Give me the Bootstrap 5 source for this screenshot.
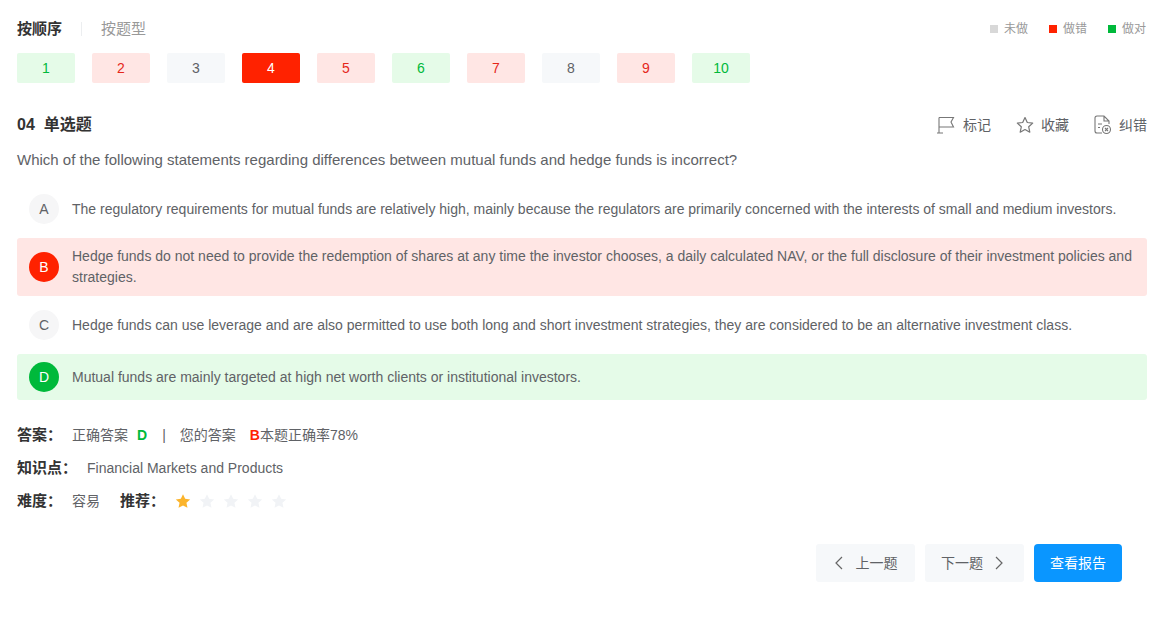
<!DOCTYPE html>
<html lang="en">
<head>
    <meta charset="UTF-8">
    <title>Quiz Result</title>
    <link href="https://cdn.jsdelivr.net/npm/bootstrap@5.3.0/dist/css/bootstrap.min.css" rel="stylesheet">
    <style>
        body {
            background: #fff;
            color: #606266;
            font-family: "Liberation Sans", "Noto Sans CJK SC", sans-serif;
            font-size: 14px;
        }
        .quiz-page { padding: 19px 19px 0 17px; }
        .top-bar { height: 20px; }
        .tab-on { font-size: 15px; font-weight: 700; color: #333; }
        .tab-sep { width: 1px; height: 14px; background: #eceef0; margin: 0 19px; }
        .tab-off { font-size: 15px; color: #999; }
        .legend-list { gap: 21px; padding-right: 1px; }
        .legend-item { font-size: 12px; color: #999; gap: 6px; }
        .legend-dot { width: 8px; height: 8px; }
        .dot-gray { background: #d8d8d8; }
        .dot-red { background: #ff2200; }
        .dot-green { background: #00b93b; }
        .num-row { gap: 17px; margin-top: 14px; }
        .num-tile { width: 58px; height: 30px; border-radius: 2px; }
        .tile-right { background: #e5fbe8; color: #00b93b; }
        .tile-wrong { background: #ffe6e4; color: #e5261a; }
        .tile-none { background: #f6f8fa; color: #606266; }
        .tile-current { background: #ff2200; color: #fff; }
        .head-row { margin-top: 30px; height: 24px; }
        .q-type { font-size: 16px; font-weight: 700; color: #333; }
        .q-type span { margin-left: 9px; }
        .tool-list { gap: 25px; }
        .tool-item { color: #606266; gap: 7px; }
        .q-text { font-size: 15px; margin-top: 12px; line-height: 22px; }
        .opt-list { margin-top: 15px; gap: 6px; }
        .opt-row { min-height: 46px; padding: 8px 13px 8px 12px; border-radius: 3px; gap: 13px; line-height: 21px; }
        .opt-wrong { background: #ffe6e4; }
        .opt-right { background: #e5fbe8; }
        .opt-letter { width: 30px; height: 30px; border-radius: 50%; background: #f6f6f7; flex-shrink: 0; }
        .letter-wrong { background: #ff2200; color: #fff; }
        .letter-right { background: #00b93b; color: #fff; }
        .info-block { margin-top: 19px; }
        .info-row { height: 33px; }
        .info-label { font-size: 15px; font-weight: 700; color: #333; margin-right: 10px; }
        .ans-right { color: #00b93b; font-weight: 700; margin-left: 9px; }
        .ans-sep { margin: 0 14px 0 15px; }
        .ans-wrong { color: #ff2200; font-weight: 700; margin-left: 14px; }
        .easy-text { margin-right: 20px; }
        .star-row { gap: 8px; margin-bottom: 2px; }
        .foot-row { margin-top: 26px; padding-right: 25px; gap: 10px; }
        .page-btn { height: 38px; width: 99px; background: #f6f8fa; border: 0; border-radius: 3px; color: #606266; font-size: 14px; gap: 12px; }
        .next-btn { gap: 11px; padding-right: 10px; }
        .report-btn { height: 38px; width: 88px; background: #0a96ff; border: 0; border-radius: 4px; color: #fff; font-size: 14px; }
    </style>
</head>
<body>

<div class="quiz-page">
    <div class="top-bar d-flex align-items-center justify-content-between">
        <div class="d-flex align-items-center">
            <span class="tab-on">按顺序</span>
            <span class="tab-sep"></span>
            <span class="tab-off">按题型</span>
        </div>
        <div class="legend-list d-flex align-items-center">
            <span class="legend-item d-flex align-items-center"><i class="legend-dot dot-gray"></i>未做</span>
            <span class="legend-item d-flex align-items-center"><i class="legend-dot dot-red"></i>做错</span>
            <span class="legend-item d-flex align-items-center"><i class="legend-dot dot-green"></i>做对</span>
        </div>
    </div>

    <div class="num-row d-flex">
        <div class="num-tile tile-right d-flex align-items-center justify-content-center">1</div>
        <div class="num-tile tile-wrong d-flex align-items-center justify-content-center">2</div>
        <div class="num-tile tile-none d-flex align-items-center justify-content-center">3</div>
        <div class="num-tile tile-current d-flex align-items-center justify-content-center">4</div>
        <div class="num-tile tile-wrong d-flex align-items-center justify-content-center">5</div>
        <div class="num-tile tile-right d-flex align-items-center justify-content-center">6</div>
        <div class="num-tile tile-wrong d-flex align-items-center justify-content-center">7</div>
        <div class="num-tile tile-none d-flex align-items-center justify-content-center">8</div>
        <div class="num-tile tile-wrong d-flex align-items-center justify-content-center">9</div>
        <div class="num-tile tile-right d-flex align-items-center justify-content-center">10</div>
    </div>

    <div class="head-row d-flex align-items-center justify-content-between">
        <div class="q-type">04<span>单选题</span></div>
        <div class="tool-list d-flex">
            <span class="tool-item d-flex align-items-center">
                <svg width="20" height="20" viewBox="0 0 20 20" fill="none" stroke="#777" stroke-width="1.1"><path d="M3 2.500h14.500l-2.500 4.500 2.500 5H3M3 2.500V18M1 18h6"/></svg>标记
            </span>
            <span class="tool-item d-flex align-items-center">
                <svg width="18" height="18" viewBox="0 0 18 18" fill="none" stroke="#777" stroke-width="1.2" stroke-linejoin="round"><path d="M9 1.500l2.300 5 5.400.6-4 3.700 1.100 5.400L9 13.500l-4.800 2.700 1.100-5.400-4-3.700 5.400-.6z"/></svg>收藏
            </span>
            <span class="tool-item d-flex align-items-center">
                <svg width="18" height="20" viewBox="0 0 18 20" fill="none" stroke="#777" stroke-width="1.1"><path d="M8 18H3a2 2 0 0 1-2-2V3a2 2 0 0 1 2-2h7l5 5v3M10 1v5h5M4 9h4M4 12.500h2"/><circle cx="12.500" cy="14.500" r="4"/><path d="M11 13l3 3M14 13l-3 3"/></svg>纠错
            </span>
        </div>
    </div>

    <div class="q-text">Which of the following statements regarding differences between mutual funds and hedge funds is incorrect?</div>

    <div class="opt-list d-flex flex-column">
        <div class="opt-row d-flex align-items-center">
            <div class="opt-letter d-flex align-items-center justify-content-center">A</div>
            <div>The regulatory requirements for mutual funds are relatively high, mainly because the regulators are primarily concerned with the interests of small and medium investors.</div>
        </div>
        <div class="opt-row opt-wrong d-flex align-items-center">
            <div class="opt-letter letter-wrong d-flex align-items-center justify-content-center">B</div>
            <div>Hedge funds do not need to provide the redemption of shares at any time the investor chooses, a daily calculated NAV, or the full disclosure of their investment policies and strategies.</div>
        </div>
        <div class="opt-row d-flex align-items-center">
            <div class="opt-letter d-flex align-items-center justify-content-center">C</div>
            <div>Hedge funds can use leverage and are also permitted to use both long and short investment strategies, they are considered to be an alternative investment class.</div>
        </div>
        <div class="opt-row opt-right d-flex align-items-center">
            <div class="opt-letter letter-right d-flex align-items-center justify-content-center">D</div>
            <div>Mutual funds are mainly targeted at high net worth clients or institutional investors.</div>
        </div>
    </div>

    <div class="info-block">
        <div class="info-row d-flex align-items-center">
            <span class="info-label">答案：</span>
            <span>正确答案</span><span class="ans-right">D</span>
            <span class="ans-sep">|</span>
            <span>您的答案</span><span class="ans-wrong">B</span><span>本题正确率78%</span>
        </div>
        <div class="info-row d-flex align-items-center">
            <span class="info-label">知识点：</span>
            <span>Financial Markets and Products</span>
        </div>
        <div class="info-row d-flex align-items-center">
            <span class="info-label">难度：</span>
            <span class="easy-text">容易</span>
            <span class="info-label">推荐：</span>
            <span class="star-row d-flex">
                <svg width="16" height="16" viewBox="0 0 20 19" fill="#fbb42c"><path d="M10 1l2.700 5.800 6.300.7-4.700 4.300 1.300 6.200L10 15l-5.600 3 1.300-6.200L1 7.500l6.300-.7z"/></svg>
                <svg width="16" height="16" viewBox="0 0 20 19" fill="#f1f3f6"><path d="M10 1l2.700 5.800 6.300.7-4.700 4.300 1.300 6.200L10 15l-5.600 3 1.300-6.200L1 7.500l6.300-.7z"/></svg>
                <svg width="16" height="16" viewBox="0 0 20 19" fill="#f1f3f6"><path d="M10 1l2.700 5.800 6.300.7-4.700 4.300 1.300 6.200L10 15l-5.600 3 1.300-6.200L1 7.500l6.300-.7z"/></svg>
                <svg width="16" height="16" viewBox="0 0 20 19" fill="#f1f3f6"><path d="M10 1l2.700 5.800 6.300.7-4.700 4.300 1.300 6.200L10 15l-5.600 3 1.300-6.200L1 7.500l6.300-.7z"/></svg>
                <svg width="16" height="16" viewBox="0 0 20 19" fill="#f1f3f6"><path d="M10 1l2.700 5.800 6.300.7-4.700 4.300 1.300 6.200L10 15l-5.600 3 1.300-6.200L1 7.500l6.300-.7z"/></svg>
            </span>
        </div>
    </div>

    <div class="foot-row d-flex justify-content-end">
        <button class="page-btn d-flex align-items-center justify-content-center">
            <svg width="10" height="14" viewBox="0 0 10 14" fill="none" stroke="#666" stroke-width="1.2"><path d="M8 1L2 7l6 6"/></svg>上一题
        </button>
        <button class="page-btn next-btn d-flex align-items-center justify-content-center">下一题
            <svg width="10" height="14" viewBox="0 0 10 14" fill="none" stroke="#666" stroke-width="1.2"><path d="M2 1l6 6-6 6"/></svg>
        </button>
        <button class="report-btn">查看报告</button>
    </div>
</div>

<script src="https://cdn.jsdelivr.net/npm/bootstrap@5.3.0/dist/js/bootstrap.bundle.min.js"></script>
</body>
</html>
